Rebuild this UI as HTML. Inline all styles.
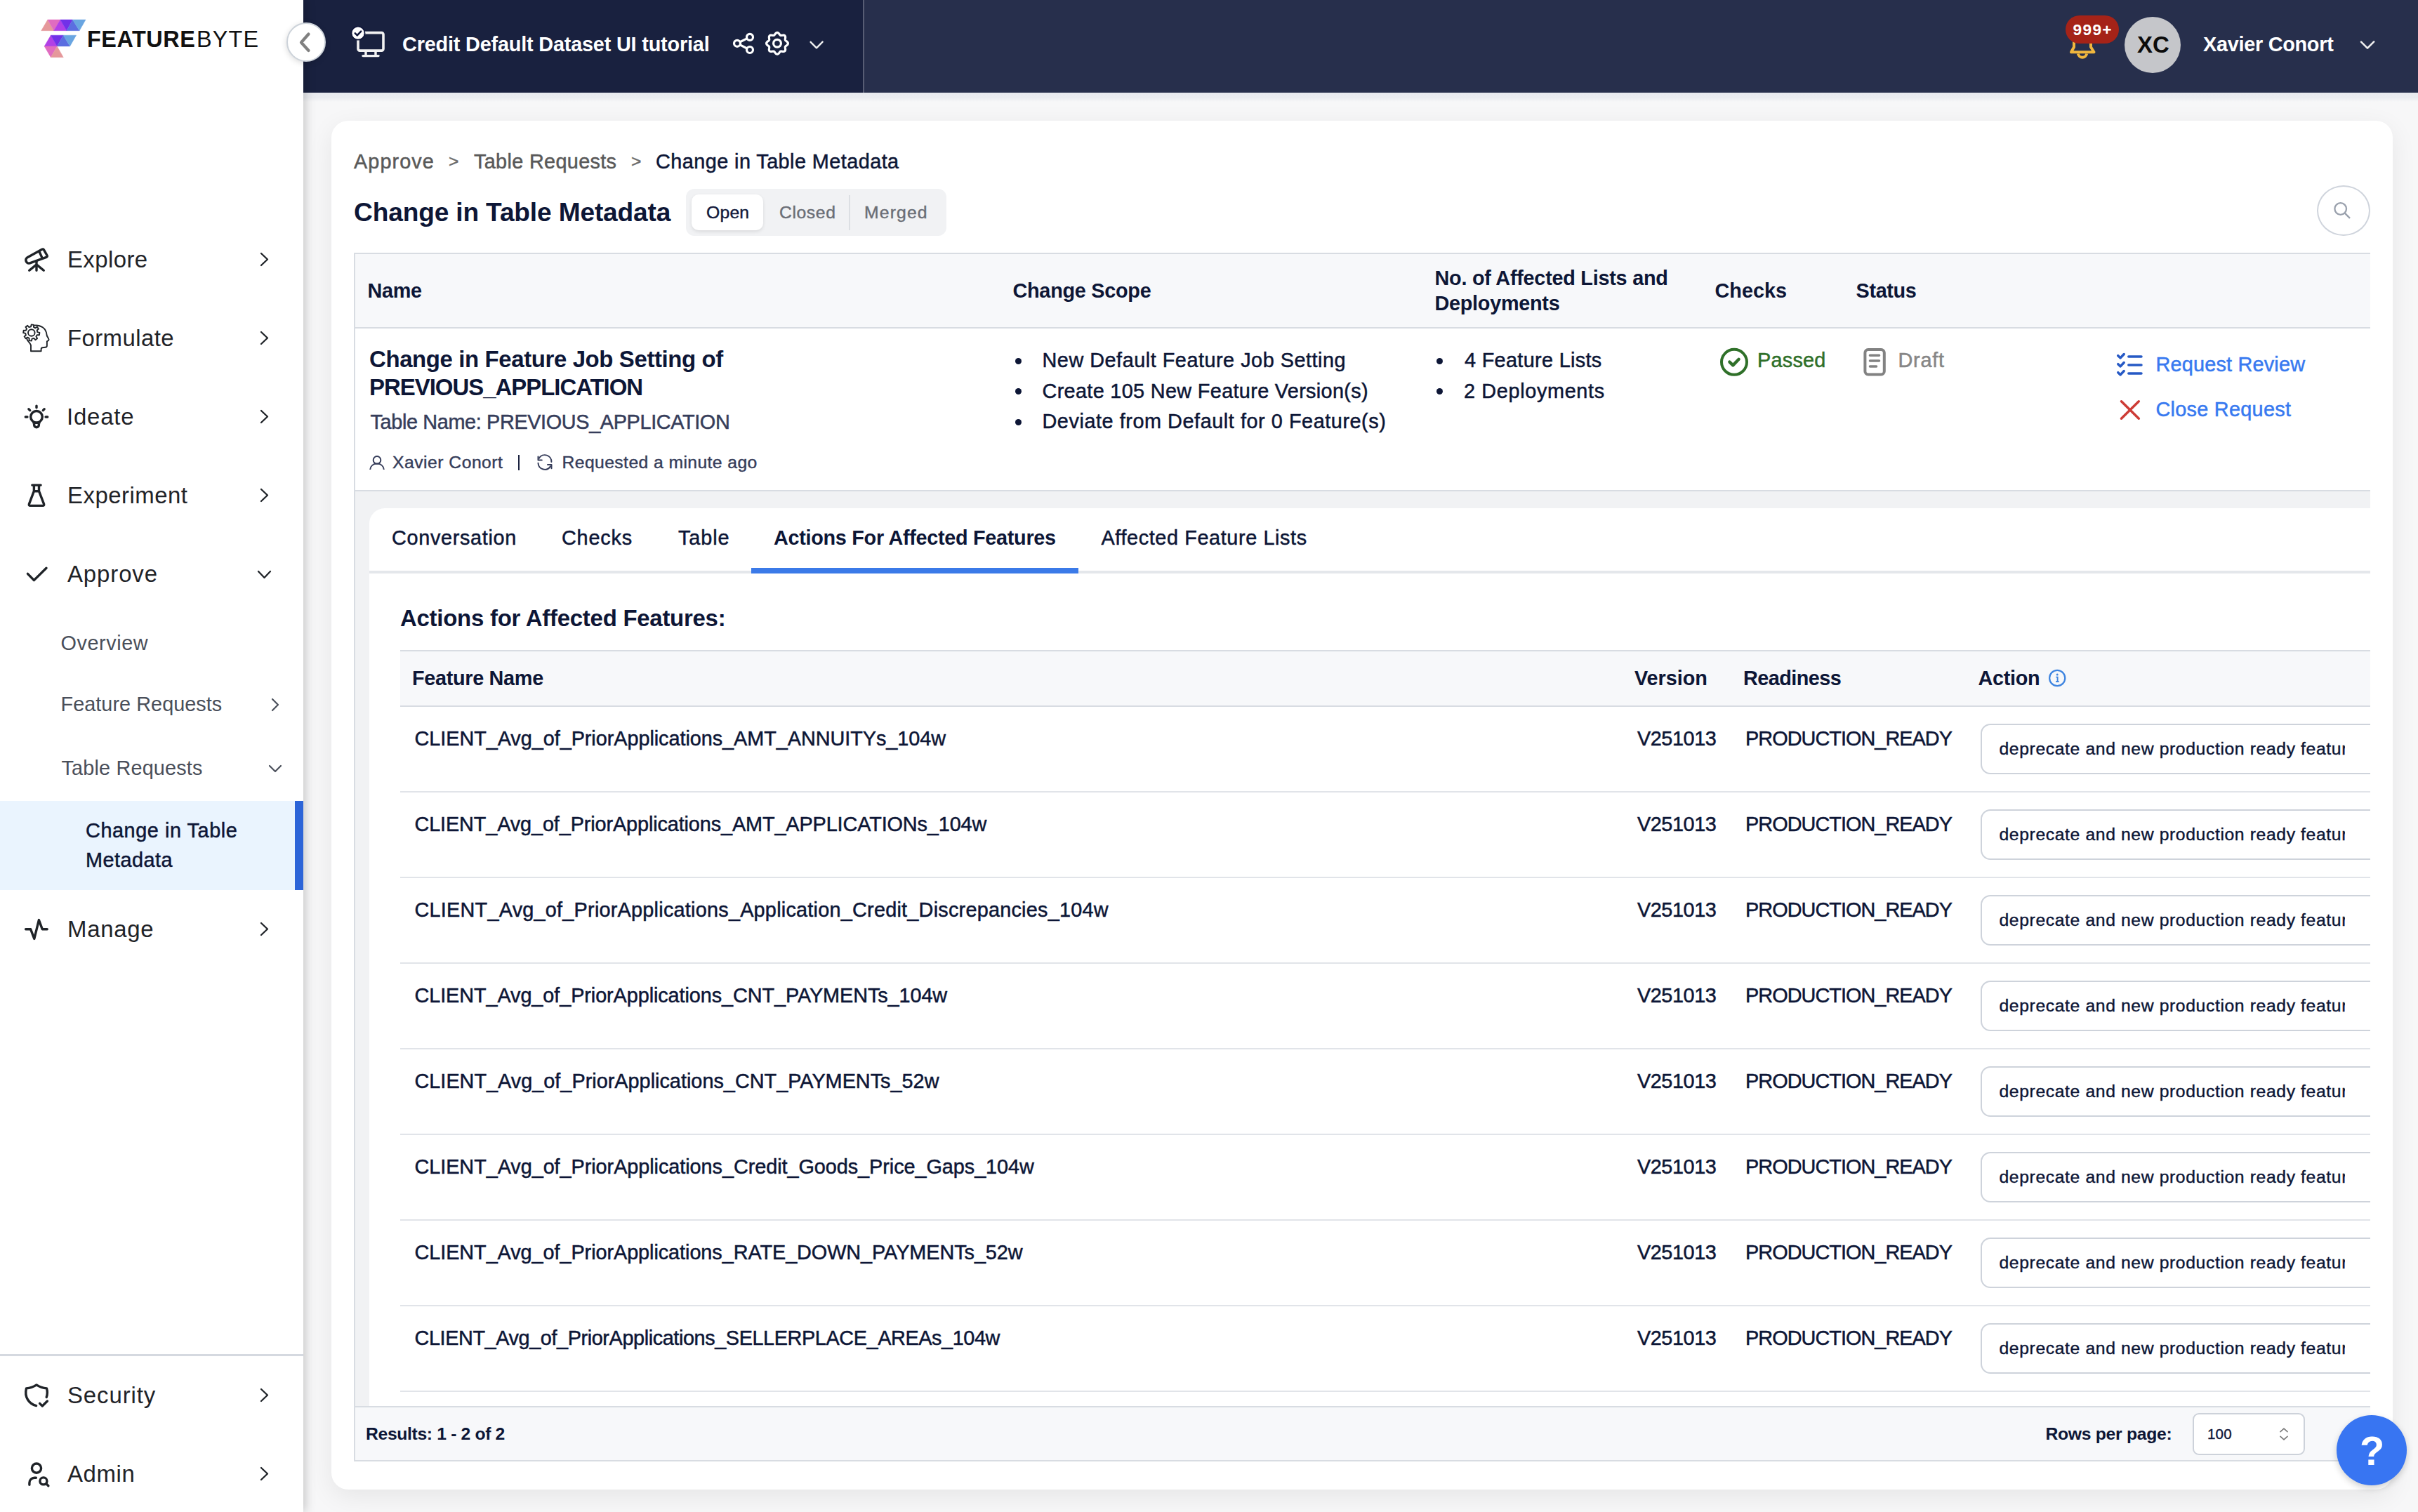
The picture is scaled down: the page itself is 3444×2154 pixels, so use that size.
<!DOCTYPE html>
<html lang="en">
<head>
<meta charset="utf-8">
<title>FeatureByte - Change in Table Metadata</title>
<style>
*{box-sizing:border-box;margin:0;padding:0;}
html,body{width:3444px;height:2154px;overflow:hidden;background:#f7f7f8;}
body{font-family:"Liberation Sans",sans-serif;color:#0d1636;}
#root{position:relative;width:3444px;height:2154px;overflow:hidden;background:#f7f7f8;}
.abs{position:absolute;}
svg{overflow:visible;}
.t{position:absolute;white-space:nowrap;line-height:1;transform:translateY(-50%);}
.logo{font-family:"Liberation Sans",sans-serif;letter-spacing:0.55px;}
.logo b{font-weight:700;}
.logo .lt{font-weight:400;margin-left:1.5px;letter-spacing:1.2px;}
#sidebar{position:absolute;left:0;top:0;width:432px;height:2154px;background:#fff;box-shadow:3px 0 14px rgba(0,0,0,.20);z-index:5;}
#header{position:absolute;left:0;top:0;width:3444px;height:132px;background:#272f4c;z-index:3;}
#hleft{position:absolute;left:432px;top:0;width:799px;height:132px;background:#19213f;border-right:2px solid #575d74;}
#hshadow{position:absolute;left:432px;top:132px;width:3012px;height:13px;background:linear-gradient(#e8eaef 0,#eaecf0 55%,#f7f7f8 100%);z-index:0;}
#collapse{position:absolute;left:408px;top:32px;width:56px;height:56px;border-radius:50%;background:#fff;border:2px solid #cdd3da;z-index:6;box-shadow:0 2px 8px rgba(0,0,0,.15);}
#card{position:absolute;left:472px;top:172px;width:2936px;height:1950px;background:#fff;border-radius:24px;box-shadow:0 10px 36px rgba(0,0,0,.075);z-index:1;}
#cardin{position:absolute;left:-472px;top:-172px;width:3444px;height:2154px;}
#clip{position:absolute;left:0;top:0;width:3376px;height:2154px;overflow:hidden;}
#help{position:absolute;left:3328px;top:2016px;width:100px;height:100px;border-radius:50%;background:#3875f2;z-index:8;box-shadow:0 4px 10px rgba(0,0,0,.18);}
</style>
</head>
<body>
<div id="root">
<div id="hshadow"></div>
<div id="header"><div id="hleft"></div>
<svg class="abs" style="left:495px;top:30px;" width="70" height="60" viewBox="495 30 70 60" fill="none"><rect x="510" y="46.6" width="36" height="25.5" rx="2.5" stroke="#f2f2f2" stroke-width="3.6"/><path d="M521 73 V79 M535 73 V79" stroke="#f2f2f2" stroke-width="3.4"/><path d="M517 79.6 H539" stroke="#f2f2f2" stroke-width="3.4" stroke-linecap="round"/><circle cx="510" cy="47.2" r="10.4" fill="#10163a"/><circle cx="510" cy="47.2" r="8.6" fill="#fff"/><path d="M505.8 47.4 L508.8 50.3 L514.2 44.6" stroke="#10163a" stroke-width="2.5" stroke-linecap="round" stroke-linejoin="round"/></svg>
<span class="t" id="t14" style="left:573px;top:63.4px;font-size:28.84px;font-weight:600;color:#ffffff;letter-spacing:-0.183px;">Credit Default Dataset UI tutorial</span>
<svg class="abs" style="left:1040px;top:40px;" width="40" height="44" viewBox="1040 40 40 44" fill="none"><g stroke="#fff" stroke-width="3.2"><circle cx="1050" cy="61.8" r="4.5"/><circle cx="1068" cy="52.9" r="4.5"/><circle cx="1068" cy="71" r="4.5"/><path d="M1054.1 59.8 L1063.9 54.9 M1054.1 63.8 L1063.9 69"/></g></svg>
<svg class="abs" style="left:1085px;top:40px;" width="44" height="44" viewBox="1085 40 44 44" fill="none"><g stroke="#fff" stroke-width="3.2" stroke-linejoin="round"><path d="M1122.40 61.80 L1122.31 62.40 L1122.07 62.99 L1121.68 63.54 L1121.19 64.05 L1120.63 64.51 L1120.07 64.94 L1119.53 65.33 L1119.07 65.72 L1118.70 66.12 L1118.46 66.55 L1118.33 67.02 L1118.30 67.56 L1118.36 68.16 L1118.46 68.82 L1118.56 69.52 L1118.62 70.24 L1118.61 70.95 L1118.49 71.62 L1118.25 72.20 L1117.89 72.69 L1117.40 73.05 L1116.82 73.29 L1116.15 73.41 L1115.44 73.42 L1114.72 73.36 L1114.02 73.26 L1113.36 73.16 L1112.76 73.10 L1112.22 73.13 L1111.75 73.26 L1111.32 73.50 L1110.92 73.87 L1110.53 74.33 L1110.14 74.87 L1109.71 75.43 L1109.25 75.99 L1108.74 76.48 L1108.19 76.87 L1107.60 77.11 L1107.00 77.20 L1106.40 77.11 L1105.81 76.87 L1105.26 76.48 L1104.75 75.99 L1104.29 75.43 L1103.86 74.87 L1103.47 74.33 L1103.08 73.87 L1102.68 73.50 L1102.25 73.26 L1101.78 73.13 L1101.24 73.10 L1100.64 73.16 L1099.98 73.26 L1099.28 73.36 L1098.56 73.42 L1097.85 73.41 L1097.18 73.29 L1096.60 73.05 L1096.11 72.69 L1095.75 72.20 L1095.51 71.62 L1095.39 70.95 L1095.38 70.24 L1095.44 69.52 L1095.54 68.82 L1095.64 68.16 L1095.70 67.56 L1095.67 67.02 L1095.54 66.55 L1095.30 66.12 L1094.93 65.72 L1094.47 65.33 L1093.93 64.94 L1093.37 64.51 L1092.81 64.05 L1092.32 63.54 L1091.93 62.99 L1091.69 62.40 L1091.60 61.80 L1091.69 61.20 L1091.93 60.61 L1092.32 60.06 L1092.81 59.55 L1093.37 59.09 L1093.93 58.66 L1094.47 58.27 L1094.93 57.88 L1095.30 57.48 L1095.54 57.05 L1095.67 56.58 L1095.70 56.04 L1095.64 55.44 L1095.54 54.78 L1095.44 54.08 L1095.38 53.36 L1095.39 52.65 L1095.51 51.98 L1095.75 51.40 L1096.11 50.91 L1096.60 50.55 L1097.18 50.31 L1097.85 50.19 L1098.56 50.18 L1099.28 50.24 L1099.98 50.34 L1100.64 50.44 L1101.24 50.50 L1101.78 50.47 L1102.25 50.34 L1102.68 50.10 L1103.08 49.73 L1103.47 49.27 L1103.86 48.73 L1104.29 48.17 L1104.75 47.61 L1105.26 47.12 L1105.81 46.73 L1106.40 46.49 L1107.00 46.40 L1107.60 46.49 L1108.19 46.73 L1108.74 47.12 L1109.25 47.61 L1109.71 48.17 L1110.14 48.73 L1110.53 49.27 L1110.92 49.73 L1111.32 50.10 L1111.75 50.34 L1112.22 50.47 L1112.76 50.50 L1113.36 50.44 L1114.02 50.34 L1114.72 50.24 L1115.44 50.18 L1116.15 50.19 L1116.82 50.31 L1117.40 50.55 L1117.89 50.91 L1118.25 51.40 L1118.49 51.98 L1118.61 52.65 L1118.62 53.36 L1118.56 54.08 L1118.46 54.78 L1118.36 55.44 L1118.30 56.04 L1118.33 56.58 L1118.46 57.05 L1118.70 57.48 L1119.07 57.88 L1119.53 58.27 L1120.07 58.66 L1120.63 59.09 L1121.19 59.55 L1121.68 60.06 L1122.07 60.61 L1122.31 61.20Z"/><circle cx="1107" cy="61.8" r="5.4"/></g></svg>
<svg class="abs" style="left:1148px;top:52px;" width="30" height="24" viewBox="1148 52 30 24" fill="none"><path d="M1154.6 59.8 L1163 68.3 L1171.6 59.6" stroke="#eee" stroke-width="2.4" stroke-linecap="round" stroke-linejoin="round"/></svg>
<svg class="abs" style="left:2940px;top:26px;" width="50" height="64" viewBox="2940 26 50 64" fill="none"><g stroke="#f0b73e" stroke-width="4" stroke-linejoin="round"><path d="M2950 74.3 H2982.5 L2978 67 V46 A12 12 0 0 0 2954 46 V67 Z"/><path d="M2959.8 76.5 A6.3 6.3 0 0 0 2972.2 76.5" stroke-linecap="butt"/></g></svg>
<div class="abs" style="left:2942px;top:22px;width:76px;height:40px;background:#a52318;border-radius:20px;"></div>
<span class="t" id="t15" style="left:2952.5px;top:42px;font-size:22.66px;font-weight:700;color:#fff;letter-spacing:1.353px;">999+</span>
<div class="abs" style="left:3026px;top:24px;width:80px;height:80px;background:#c5c6ca;border-radius:50%;"></div>
<span class="t" id="t16" style="left:3044px;top:63.6px;font-size:32.96px;font-weight:700;color:#0c0c0c;letter-spacing:-0.042px;">XC</span>
<span class="t" id="t17" style="left:3138px;top:63.2px;font-size:28.84px;font-weight:600;color:#fff;letter-spacing:-0.273px;">Xavier Conort</span>
<svg class="abs" style="left:3355px;top:52px;" width="34" height="24" viewBox="3355 52 34 24" fill="none"><path d="M3363 59.6 L3372 68.6 L3381.2 59.4" stroke="#eee" stroke-width="2.6" stroke-linecap="round" stroke-linejoin="round"/></svg>
</div>
<div id="sidebar">
<svg class="abs" style="left:0px;top:0px;" width="432" height="110" viewBox="0 0 432 110" fill="none"><polygon points="58.68,43.70 67.87,28.06 76.67,43.70" fill="#e5989b" stroke="#e5989b" stroke-width="0.4"/><polygon points="67.87,28.06 85.86,28.06 76.67,43.70" fill="#e06cc0" stroke="#e06cc0" stroke-width="0.4"/><polygon points="76.67,43.70 85.86,28.06 94.98,43.70" fill="#b140e6" stroke="#b140e6" stroke-width="0.4"/><polygon points="85.86,28.06 103.47,28.06 94.98,43.70" fill="#7131e8" stroke="#7131e8" stroke-width="0.4"/><polygon points="94.98,43.70 103.47,28.06 113.15,43.70" fill="#5b6ee0" stroke="#5b6ee0" stroke-width="0.4"/><polygon points="103.47,28.06 122.08,28.06 113.15,43.70" fill="#69a5e1" stroke="#69a5e1" stroke-width="0.4"/><polygon points="63.15,65.91 72.33,50.15 81.33,65.91" fill="#b140e6" stroke="#b140e6" stroke-width="0.4"/><polygon points="72.33,50.15 90.20,50.15 81.33,65.91" fill="#7131e8" stroke="#7131e8" stroke-width="0.4"/><polygon points="81.33,65.91 90.20,50.15 99.63,65.91" fill="#5b6ee0" stroke="#5b6ee0" stroke-width="0.4"/><polygon points="90.20,50.15 108.62,50.15 99.63,65.91" fill="#69a5e1" stroke="#69a5e1" stroke-width="0.4"/><polygon points="63.15,65.91 81.33,65.91 72.33,81.72" fill="#e06cc0" stroke="#e06cc0" stroke-width="0.4"/><polygon points="81.33,65.91 90.32,81.72 72.33,81.72" fill="#e5989b" stroke="#e5989b" stroke-width="0.4"/></svg>
<span class="t logo" id="lg" style="left:124px;top:55.5px;font-size:32.4px;color:#111;"><b>FEATURE</b><span class="lt">BYTE</span></span>
<svg class="abs" style="left:24px;top:340px;" width="60" height="60" viewBox="0 0 60 60" fill="none"><g stroke="#1f2328" stroke-width="3.4" stroke-linecap="round" stroke-linejoin="round"><path d="M14.6 27 L35.8 15.3 Q37.6 14.3 38.6 16.1 L43.1 24 Q43.9 25.7 42.1 26.4 L18.5 34.8 Q15 36 13.3 32.6 Q11.9 29 14.6 27 Z"/><path d="M32.1 18.7 L35.7 26.6"/><path d="M28 31.6 V45.2 M28 36.9 L17.7 45.2 M28 36.9 L38.3 45.2"/></g></svg>
<span class="t" id="t1" style="left:96px;top:370.2px;font-size:32.96px;color:#1f2328;letter-spacing:0.391px;">Explore</span>
<svg class="abs" style="left:368.5px;top:358px;" width="15" height="23" viewBox="-7.5 -11.5 15 23" fill="none"><path d="M-4.5 -8.5 L4.5 0 L-4.5 8.5" stroke="#1f2328" stroke-width="2.3" stroke-linecap="round" stroke-linejoin="round"/></svg>
<svg class="abs" style="left:24px;top:452px;" width="60" height="60" viewBox="0 0 60 60" fill="none"><g stroke="#1f2328" stroke-width="1.9" stroke-linecap="round" stroke-linejoin="round"><path d="M29.36 21.18 L32.40 21.89 L31.92 25.30 L28.80 25.15 L27.44 27.47 L29.08 30.12 L26.33 32.20 L24.23 29.89 L21.62 30.56 L20.91 33.60 L17.50 33.12 L17.65 30.00 L15.33 28.64 L12.68 30.28 L10.60 27.53 L12.91 25.43 L12.24 22.82 L9.20 22.11 L9.68 18.70 L12.80 18.85 L14.16 16.53 L12.52 13.88 L15.27 11.80 L17.37 14.11 L19.98 13.44 L20.69 10.40 L24.10 10.88 L23.95 14.00 L26.27 15.36 L28.92 13.72 L31.00 16.47 L28.69 18.57Z"/><circle cx="20.8" cy="22" r="4.8"/><path d="M24.6 11.6 C34 10.6 41.5 15.5 42.5 24.5 C42.3 27 45.6 30 45.6 32 C45.6 33.6 43.4 33.8 42.9 34.3 V40.5 Q42.9 42.6 40.5 42.8 L36.5 43.2 Q34.6 43.5 34.6 45.4 V48.2 H20 V39.7 C19 36.5 14.5 33.5 13.9 29.8"/></g></svg>
<span class="t" id="t2" style="left:96px;top:481.7px;font-size:32.96px;color:#1f2328;letter-spacing:0.397px;">Formulate</span>
<svg class="abs" style="left:368.5px;top:469.5px;" width="15" height="23" viewBox="-7.5 -11.5 15 23" fill="none"><path d="M-4.5 -8.5 L4.5 0 L-4.5 8.5" stroke="#1f2328" stroke-width="2.3" stroke-linecap="round" stroke-linejoin="round"/></svg>
<svg class="abs" style="left:24px;top:564px;" width="60" height="60" viewBox="0 0 60 60" fill="none"><g stroke="#1f2328" stroke-width="3.4" stroke-linecap="round" stroke-linejoin="round"><circle cx="28" cy="29.8" r="8.3"/><path d="M23.8 38.3 H32.2 M24.6 38.3 V41.3 A3.4 3.4 0 0 0 31.4 41.3 V38.3"/><path d="M28 14.1 V16.7 M12.3 30 H14.9 M41.1 30 H43.7 M16.9 18.8 L18.7 20.6 M39.1 18.8 L37.3 20.6"/></g></svg>
<span class="t" id="t3" style="left:95px;top:593.7px;font-size:32.96px;color:#1f2328;letter-spacing:0.798px;">Ideate</span>
<svg class="abs" style="left:368.5px;top:581.5px;" width="15" height="23" viewBox="-7.5 -11.5 15 23" fill="none"><path d="M-4.5 -8.5 L4.5 0 L-4.5 8.5" stroke="#1f2328" stroke-width="2.3" stroke-linecap="round" stroke-linejoin="round"/></svg>
<svg class="abs" style="left:24px;top:676px;" width="60" height="60" viewBox="24 676 60 60" fill="none"><g stroke="#1f2328" stroke-width="3.4" stroke-linecap="round" stroke-linejoin="round"><path d="M45.8 691.1 H58.1 M48.4 691.1 V699.7 L41.4 718.2 Q40.8 720.4 43 720.4 H61 Q63.2 720.4 62.6 718.2 L55.5 699.7 V691.1 M48.4 699.7 H55.5"/></g></svg>
<span class="t" id="t4" style="left:96px;top:706.1px;font-size:32.96px;color:#1f2328;letter-spacing:0.482px;">Experiment</span>
<svg class="abs" style="left:368.5px;top:693.9px;" width="15" height="23" viewBox="-7.5 -11.5 15 23" fill="none"><path d="M-4.5 -8.5 L4.5 0 L-4.5 8.5" stroke="#1f2328" stroke-width="2.3" stroke-linecap="round" stroke-linejoin="round"/></svg>
<svg class="abs" style="left:24px;top:788px;" width="60" height="60" viewBox="24 788 60 60" fill="none"><path d="M39.4 817.4 L48.4 826.6 L66 809.2" stroke="#1f2328" stroke-width="3.4" stroke-linecap="round" stroke-linejoin="round"/></svg>
<span class="t" id="t5" style="left:96px;top:818.3px;font-size:32.96px;color:#1f2328;letter-spacing:0.882px;">Approve</span>
<svg class="abs" style="left:364.5px;top:810.5px;" width="23" height="15" viewBox="-11.5 -7.5 23 15" fill="none"><path d="M-8.5 -4.5 L0 4.5 L8.5 -4.5" stroke="#1f2328" stroke-width="2.3" stroke-linecap="round" stroke-linejoin="round"/></svg>
<span class="t" id="t6" style="left:86.5px;top:915.8px;font-size:28.84px;color:#4a4f5a;letter-spacing:0.559px;">Overview</span>
<span class="t" id="t7" style="left:86.5px;top:1003px;font-size:28.84px;color:#4a4f5a;letter-spacing:0.042px;">Feature Requests</span>
<svg class="abs" style="left:385px;top:992.6px;" width="14" height="22" viewBox="-7 -11 14 22" fill="none"><path d="M-4 -8 L4 0 L-4 8" stroke="#4a4f5a" stroke-width="2.2" stroke-linecap="round" stroke-linejoin="round"/></svg>
<span class="t" id="t8" style="left:87.5px;top:1094px;font-size:28.84px;color:#4a4f5a;letter-spacing:0.169px;">Table Requests</span>
<svg class="abs" style="left:381px;top:1087.5px;" width="22" height="14" viewBox="-11 -7 22 14" fill="none"><path d="M-8 -4 L0 4 L8 -4" stroke="#4a4f5a" stroke-width="2.2" stroke-linecap="round" stroke-linejoin="round"/></svg>
<div class="abs" style="left:0px;top:1141px;width:432px;height:127px;background:#eaf4fe;"></div>
<div class="abs" style="left:420px;top:1141px;width:12px;height:127px;background:#2c64d8;"></div>
<span class="t" id="t9" style="left:122px;top:1182.6px;font-size:28.84px;-webkit-text-stroke:0.49px;letter-spacing:0.566px;">Change in Table</span>
<span class="t" id="t10" style="left:122px;top:1225.4px;font-size:28.84px;-webkit-text-stroke:0.49px;letter-spacing:0.468px;">Metadata</span>
<svg class="abs" style="left:24px;top:1293px;" width="60" height="60" viewBox="24 1293 60 60" fill="none"><path d="M36.6 1323.7 H43.6 L48.8 1337.4 L55.4 1310.6 L60.2 1323.7 H67.2" stroke="#1f2328" stroke-width="3.4" stroke-linecap="round" stroke-linejoin="round"/></svg>
<span class="t" id="t11" style="left:96px;top:1324.1px;font-size:32.96px;color:#1f2328;letter-spacing:0.723px;">Manage</span>
<svg class="abs" style="left:368.5px;top:1311.9px;" width="15" height="23" viewBox="-7.5 -11.5 15 23" fill="none"><path d="M-4.5 -8.5 L4.5 0 L-4.5 8.5" stroke="#1f2328" stroke-width="2.3" stroke-linecap="round" stroke-linejoin="round"/></svg>
<div class="abs" style="left:0px;top:1929px;width:432px;height:3px;background:#d5d9e0;"></div>
<svg class="abs" style="left:24px;top:1958px;" width="60" height="60" viewBox="0 0 60 60" fill="none"><g stroke="#1f2328" stroke-width="3.4" stroke-linecap="round" stroke-linejoin="round"><path d="M42.2 32.5 C43.8 27.5 43.6 23.3 42.5 19.9 Q35 19.5 28 14.9 Q21 19.5 13.5 19.9 C10.3 32.5 17.5 42 27.6 44.6"/><path d="M32.6 41.4 L36.3 45 L43.4 38"/></g></svg>
<span class="t" id="t12" style="left:96px;top:1988px;font-size:32.96px;color:#1f2328;letter-spacing:0.889px;">Security</span>
<svg class="abs" style="left:368.5px;top:1975.8px;" width="15" height="23" viewBox="-7.5 -11.5 15 23" fill="none"><path d="M-4.5 -8.5 L4.5 0 L-4.5 8.5" stroke="#1f2328" stroke-width="2.3" stroke-linecap="round" stroke-linejoin="round"/></svg>
<svg class="abs" style="left:24px;top:2070px;" width="60" height="60" viewBox="0 0 60 60" fill="none"><g stroke="#1f2328" stroke-width="3.4" stroke-linecap="round" stroke-linejoin="round"><circle cx="28" cy="21.6" r="6.6"/><path d="M17.9 45.2 V42.5 A7.2 7.2 0 0 1 25.1 35.2 H27.4"/><circle cx="37.9" cy="39.9" r="5"/><path d="M41.8 43.6 L44.9 46.7"/></g></svg>
<span class="t" id="t13" style="left:96px;top:2100.2px;font-size:32.96px;color:#1f2328;letter-spacing:0.594px;">Admin</span>
<svg class="abs" style="left:368.5px;top:2088px;" width="15" height="23" viewBox="-7.5 -11.5 15 23" fill="none"><path d="M-4.5 -8.5 L4.5 0 L-4.5 8.5" stroke="#1f2328" stroke-width="2.3" stroke-linecap="round" stroke-linejoin="round"/></svg>
</div>
<div id="collapse"><svg class="abs" style="left:11.5px;top:7.5px" width="28" height="36" viewBox="0 0 28 36" fill="none"><path d="M17.5 6.5 L7 18.5 L17.5 30" stroke="#808080" stroke-width="4.2" stroke-linecap="round" stroke-linejoin="round"/></svg></div>
<div id="card"><div id="cardin"><div id="clip">
<span class="t" id="t18" style="left:504px;top:230px;font-size:28.84px;-webkit-text-stroke:0.49px;color:#595959;letter-spacing:1.060px;">Approve</span>
<span class="t" id="t19" style="left:639px;top:230px;font-size:24.72px;-webkit-text-stroke:0.42px;color:#6b6b6b;letter-spacing:0.000px;">&gt;</span>
<span class="t" id="t20" style="left:675px;top:230px;font-size:28.84px;-webkit-text-stroke:0.49px;color:#595959;letter-spacing:0.329px;">Table Requests</span>
<span class="t" id="t21" style="left:899px;top:230px;font-size:24.72px;-webkit-text-stroke:0.42px;color:#6b6b6b;letter-spacing:0.000px;">&gt;</span>
<span class="t" id="t22" style="left:934px;top:230px;font-size:28.84px;-webkit-text-stroke:0.49px;letter-spacing:0.438px;">Change in Table Metadata</span>
<span class="t" id="t23" style="left:504px;top:302.6px;font-size:37.08px;font-weight:600;letter-spacing:-0.140px;">Change in Table Metadata</span>
<div class="abs" style="left:977px;top:269px;width:371px;height:67px;background:#f1f2f4;border-radius:12px;"></div>
<div class="abs" style="left:985px;top:277px;width:102px;height:51px;background:#fff;border-radius:10px;box-shadow:0 2px 5px rgba(0,0,0,.10);"></div>
<span class="t" id="t24" style="left:1006px;top:303.3px;font-size:24.72px;-webkit-text-stroke:0.42px;color:#11183a;letter-spacing:0.203px;">Open</span>
<span class="t" id="t25" style="left:1110px;top:303.3px;font-size:24.72px;-webkit-text-stroke:0.42px;color:#6a6e76;letter-spacing:0.594px;">Closed</span>
<div class="abs" style="left:1209px;top:278px;width:2px;height:50px;background:#dcdfe3;"></div>
<span class="t" id="t26" style="left:1231px;top:303.3px;font-size:24.72px;-webkit-text-stroke:0.42px;color:#6a6e76;letter-spacing:1.146px;">Merged</span>
<div class="abs" style="left:3300px;top:264px;width:76px;height:72px;border:2px solid #cfd4dc;border-radius:50%;"></div>
<svg class="abs" style="left:3316px;top:280px;" width="44" height="44" viewBox="3316 280 44 44" fill="none"><circle cx="3333.7" cy="297.5" r="8.3" stroke="#9aa1ad" stroke-width="2.3"/><path d="M3339.8 303.6 L3347 310.9" stroke="#9aa1ad" stroke-width="2.3"/></svg>
<div class="abs" style="left:504px;top:360px;width:2872px;height:1722px;border-left:2px solid #d8dce2;"></div>
<div class="abs" style="left:504px;top:360px;width:2872px;height:108px;background:#f7f8fa;border-top:2px solid #d8dce2;border-bottom:2px solid #d8dce2;border-left:2px solid #d8dce2;"></div>
<span class="t" id="t27" style="left:523.5px;top:414px;font-size:28.84px;font-weight:600;letter-spacing:-0.312px;">Name</span>
<span class="t" id="t28" style="left:1442.5px;top:414px;font-size:28.84px;font-weight:600;letter-spacing:-0.277px;">Change Scope</span>
<span class="t" id="t29" style="left:2442.5px;top:414px;font-size:28.84px;font-weight:600;letter-spacing:0.011px;">Checks</span>
<span class="t" id="t30" style="left:2643.5px;top:414px;font-size:28.84px;font-weight:600;letter-spacing:-0.346px;">Status</span>
<span class="t" id="t31" style="left:2043.5px;top:396px;font-size:28.84px;font-weight:600;letter-spacing:-0.254px;">No. of Affected Lists and</span>
<span class="t" id="t32" style="left:2043.5px;top:432px;font-size:28.84px;font-weight:600;letter-spacing:-0.285px;">Deployments</span>
<div class="abs" style="left:506px;top:698px;width:2870px;height:2px;background:#d8dce2;"></div>
<span class="t" id="t33" style="left:526px;top:511.8px;font-size:32.96px;font-weight:600;letter-spacing:-0.387px;">Change in Feature Job Setting of</span>
<span class="t" id="t34" style="left:526px;top:551.8px;font-size:32.96px;font-weight:600;letter-spacing:-1.020px;">PREVIOUS_APPLICATION</span>
<span class="t" id="t35" style="left:527.5px;top:601.3px;font-size:28.84px;-webkit-text-stroke:0.49px;color:#363d5a;letter-spacing:-0.358px;">Table Name: PREVIOUS_APPLICATION</span>
<svg class="abs" style="left:522px;top:646px;" width="30" height="28" viewBox="522 646 30 28" fill="none"><g stroke="#363d5a" stroke-width="2"><circle cx="537" cy="655.4" r="5.3"/><path d="M527.2 669 C527.8 663.5 532 660.6 537 660.6 C542 660.6 546.2 663.5 546.8 669"/></g></svg>
<span class="t" id="t36" style="left:559px;top:659px;font-size:24.72px;-webkit-text-stroke:0.42px;color:#363d5a;letter-spacing:0.483px;">Xavier Conort</span>
<div class="abs" style="left:738px;top:647.5px;width:2px;height:22px;background:#1c2340;"></div>
<svg class="abs" style="left:760px;top:644px;" width="32" height="30" viewBox="760 644 32 30" fill="none"><g stroke="#363d5a" stroke-width="2" stroke-linecap="round" stroke-linejoin="round"><path d="M767.9 652.6 A9.5 9.5 0 0 1 785.4 658"/><path d="M766.5 650.4 V655.6 H771.8"/><path d="M766.5 659.8 A9.5 9.5 0 0 0 784 664.4"/><path d="M780 662 H785.5 V667.3"/></g></svg>
<span class="t" id="t37" style="left:800.5px;top:659px;font-size:24.72px;-webkit-text-stroke:0.42px;color:#363d5a;letter-spacing:0.404px;">Requested a minute ago</span>
<div class="abs" style="left:1446px;top:509.5px;width:9px;height:9px;background:#0d1636;border-radius:50%;"></div>
<span class="t" id="t38" style="left:1484.5px;top:513px;font-size:28.84px;-webkit-text-stroke:0.49px;letter-spacing:0.515px;">New Default Feature Job Setting</span>
<div class="abs" style="left:1446px;top:553px;width:9px;height:9px;background:#0d1636;border-radius:50%;"></div>
<span class="t" id="t39" style="left:1484.5px;top:556.5px;font-size:28.84px;-webkit-text-stroke:0.49px;letter-spacing:0.333px;">Create 105 New Feature Version(s)</span>
<div class="abs" style="left:1446px;top:596.5px;width:9px;height:9px;background:#0d1636;border-radius:50%;"></div>
<span class="t" id="t40" style="left:1484.5px;top:600px;font-size:28.84px;-webkit-text-stroke:0.49px;letter-spacing:0.553px;">Deviate from Default for 0 Feature(s)</span>
<div class="abs" style="left:2046px;top:509.5px;width:9px;height:9px;background:#0d1636;border-radius:50%;"></div>
<span class="t" id="t41" style="left:2086px;top:513px;font-size:28.84px;-webkit-text-stroke:0.49px;letter-spacing:0.323px;">4 Feature Lists</span>
<div class="abs" style="left:2046px;top:553px;width:9px;height:9px;background:#0d1636;border-radius:50%;"></div>
<span class="t" id="t42" style="left:2085px;top:556.5px;font-size:28.84px;-webkit-text-stroke:0.49px;letter-spacing:0.650px;">2 Deployments</span>
<svg class="abs" style="left:2446px;top:492px;" width="48" height="48" viewBox="2446 492 48 48" fill="none"><circle cx="2470" cy="515.8" r="18" stroke="#2f7029" stroke-width="4"/><path d="M2463.4 515.6 L2468.3 520.4 L2476.6 511.8" stroke="#2f7029" stroke-width="4.4" stroke-linecap="round" stroke-linejoin="round"/></svg>
<span class="t" id="t43" style="left:2503px;top:513.2px;font-size:28.84px;-webkit-text-stroke:0.49px;color:#2f7029;letter-spacing:0.246px;">Passed</span>
<svg class="abs" style="left:2650px;top:492px;" width="40" height="48" viewBox="2650 492 40 48" fill="none"><rect x="2656.4" y="498" width="27.4" height="35.5" rx="4.5" stroke="#828282" stroke-width="4"/><path d="M2663.4 506.2 H2676.6 M2663.4 514 H2676.6 M2663.4 522 H2672.6" stroke="#828282" stroke-width="3.4" stroke-linecap="round"/></svg>
<span class="t" id="t44" style="left:2703.5px;top:513.2px;font-size:28.84px;-webkit-text-stroke:0.49px;color:#868686;letter-spacing:0.741px;">Draft</span>
<svg class="abs" style="left:3010px;top:498px;" width="46" height="44" viewBox="3010 498 46 44" fill="none"><g stroke="#2659c5" stroke-width="3.5" stroke-linecap="round" stroke-linejoin="round"><path d="M3031.8 507.9 H3050" /><path d="M3016.8 506.7 L3020.2 509.9 L3025.2 504.5"/><path d="M3031.8 519.9 H3050" /><path d="M3016.8 518.7 L3020.2 521.9 L3025.2 516.5"/><path d="M3031.8 531.9 H3050" /><path d="M3016.8 530.7 L3020.2 533.9 L3025.2 528.5"/></g></svg>
<span class="t" id="t45" style="left:3070.5px;top:519.2px;font-size:28.84px;-webkit-text-stroke:0.49px;color:#3779f0;letter-spacing:0.200px;">Request Review</span>
<svg class="abs" style="left:3014px;top:564px;" width="40" height="40" viewBox="3014 564 40 40" fill="none"><path d="M3021.5 571.8 L3046.3 596.2 M3046.3 571.8 L3021.5 596.2" stroke="#cd3c36" stroke-width="3.5" stroke-linecap="round"/></svg>
<span class="t" id="t46" style="left:3070.5px;top:583px;font-size:28.84px;-webkit-text-stroke:0.49px;color:#3779f0;letter-spacing:0.275px;">Close Request</span>
<div class="abs" style="left:506px;top:700px;width:2870px;height:1304px;background:#f1f2f4;"></div>
<div class="abs" style="left:526px;top:724px;width:2850px;height:1280px;background:#fff;border-radius:22px 0 0 0;"></div>
<div class="abs" style="left:526px;top:813px;width:2850px;height:4px;background:#e4e7eb;"></div>
<div class="abs" style="left:1070px;top:809px;width:466px;height:8px;background:#3b7ae8;"></div>
<span class="t" id="t47" style="left:558px;top:765.5px;font-size:28.84px;-webkit-text-stroke:0.49px;letter-spacing:0.667px;">Conversation</span>
<span class="t" id="t48" style="left:800px;top:765.5px;font-size:28.84px;-webkit-text-stroke:0.49px;letter-spacing:0.786px;">Checks</span>
<span class="t" id="t49" style="left:966px;top:765.5px;font-size:28.84px;-webkit-text-stroke:0.49px;letter-spacing:0.902px;">Table</span>
<span class="t" id="t50" style="left:1102px;top:765.5px;font-size:28.84px;font-weight:600;letter-spacing:-0.304px;">Actions For Affected Features</span>
<span class="t" id="t51" style="left:1568.5px;top:765.5px;font-size:28.84px;-webkit-text-stroke:0.49px;letter-spacing:0.604px;">Affected Feature Lists</span>
<span class="t" id="t52" style="left:570px;top:881px;font-size:32.96px;font-weight:600;letter-spacing:-0.259px;">Actions for Affected Features:</span>
<div class="abs" style="left:570px;top:926px;width:2806px;height:81px;background:#f7f8fa;border-top:2px solid #d8dce2;border-bottom:2px solid #d8dce2;"></div>
<span class="t" id="t53" style="left:587px;top:966px;font-size:28.84px;font-weight:600;letter-spacing:-0.316px;">Feature Name</span>
<span class="t" id="t54" style="left:2328px;top:966px;font-size:28.84px;font-weight:600;letter-spacing:-0.059px;">Version</span>
<span class="t" id="t55" style="left:2483px;top:966px;font-size:28.84px;font-weight:600;letter-spacing:-0.561px;">Readiness</span>
<span class="t" id="t56" style="left:2817.5px;top:966px;font-size:28.84px;font-weight:600;letter-spacing:-0.310px;">Action</span>
<svg class="abs" style="left:2916px;top:952px;" width="28" height="28" viewBox="2916 952 28 28" fill="none"><circle cx="2930.2" cy="966" r="11.1" stroke="#3f85e0" stroke-width="2.3"/><circle cx="2930.2" cy="961" r="1.5" fill="#3f85e0"/><path d="M2928.4 964.6 H2930.6 V970.6 M2928.2 971 H2932.6" stroke="#3f85e0" stroke-width="1.9"/></svg>
<span class="t" id="t57" style="left:590.5px;top:1052.4px;font-size:28.84px;-webkit-text-stroke:0.49px;letter-spacing:-0.049px;">CLIENT_Avg_of_PriorApplications_AMT_ANNUITYs_104w</span>
<span class="t" id="t58" style="left:2332px;top:1052.4px;font-size:28.84px;-webkit-text-stroke:0.49px;letter-spacing:-0.444px;">V251013</span>
<span class="t" id="t59" style="left:2486px;top:1052.4px;font-size:28.84px;-webkit-text-stroke:0.49px;letter-spacing:-0.946px;">PRODUCTION_READY</span>
<div class="abs" style="left:2821px;top:1031px;width:600px;height:72px;border:2px solid #ced3db;border-radius:14px;background:#fff;"></div>
<div class="abs" style="left:2847.5px;top:1046px;width:492.5px;height:42px;overflow:hidden;"><span class="t" id="t60" style="left:0px;top:21px;font-size:24.72px;-webkit-text-stroke:0.42px;letter-spacing:0.613px;">deprecate and new production ready feature version</span></div>
<div class="abs" style="left:570px;top:1126.5px;width:2806px;height:2px;background:#e1e4e9;"></div>
<span class="t" id="t61" style="left:590.5px;top:1174.4px;font-size:28.84px;-webkit-text-stroke:0.49px;letter-spacing:-0.117px;">CLIENT_Avg_of_PriorApplications_AMT_APPLICATIONs_104w</span>
<span class="t" id="t62" style="left:2332px;top:1174.4px;font-size:28.84px;-webkit-text-stroke:0.49px;letter-spacing:-0.444px;">V251013</span>
<span class="t" id="t63" style="left:2486px;top:1174.4px;font-size:28.84px;-webkit-text-stroke:0.49px;letter-spacing:-0.946px;">PRODUCTION_READY</span>
<div class="abs" style="left:2821px;top:1153px;width:600px;height:72px;border:2px solid #ced3db;border-radius:14px;background:#fff;"></div>
<div class="abs" style="left:2847.5px;top:1168px;width:492.5px;height:42px;overflow:hidden;"><span class="t" id="t64" style="left:0px;top:21px;font-size:24.72px;-webkit-text-stroke:0.42px;letter-spacing:0.613px;">deprecate and new production ready feature version</span></div>
<div class="abs" style="left:570px;top:1248.5px;width:2806px;height:2px;background:#e1e4e9;"></div>
<span class="t" id="t65" style="left:590.5px;top:1296.4px;font-size:28.84px;-webkit-text-stroke:0.49px;letter-spacing:0.234px;">CLIENT_Avg_of_PriorApplications_Application_Credit_Discrepancies_104w</span>
<span class="t" id="t66" style="left:2332px;top:1296.4px;font-size:28.84px;-webkit-text-stroke:0.49px;letter-spacing:-0.444px;">V251013</span>
<span class="t" id="t67" style="left:2486px;top:1296.4px;font-size:28.84px;-webkit-text-stroke:0.49px;letter-spacing:-0.946px;">PRODUCTION_READY</span>
<div class="abs" style="left:2821px;top:1275px;width:600px;height:72px;border:2px solid #ced3db;border-radius:14px;background:#fff;"></div>
<div class="abs" style="left:2847.5px;top:1290px;width:492.5px;height:42px;overflow:hidden;"><span class="t" id="t68" style="left:0px;top:21px;font-size:24.72px;-webkit-text-stroke:0.42px;letter-spacing:0.613px;">deprecate and new production ready feature version</span></div>
<div class="abs" style="left:570px;top:1370.5px;width:2806px;height:2px;background:#e1e4e9;"></div>
<span class="t" id="t69" style="left:590.5px;top:1418.4px;font-size:28.84px;-webkit-text-stroke:0.49px;letter-spacing:-0.083px;">CLIENT_Avg_of_PriorApplications_CNT_PAYMENTs_104w</span>
<span class="t" id="t70" style="left:2332px;top:1418.4px;font-size:28.84px;-webkit-text-stroke:0.49px;letter-spacing:-0.444px;">V251013</span>
<span class="t" id="t71" style="left:2486px;top:1418.4px;font-size:28.84px;-webkit-text-stroke:0.49px;letter-spacing:-0.946px;">PRODUCTION_READY</span>
<div class="abs" style="left:2821px;top:1397px;width:600px;height:72px;border:2px solid #ced3db;border-radius:14px;background:#fff;"></div>
<div class="abs" style="left:2847.5px;top:1412px;width:492.5px;height:42px;overflow:hidden;"><span class="t" id="t72" style="left:0px;top:21px;font-size:24.72px;-webkit-text-stroke:0.42px;letter-spacing:0.613px;">deprecate and new production ready feature version</span></div>
<div class="abs" style="left:570px;top:1492.5px;width:2806px;height:2px;background:#e1e4e9;"></div>
<span class="t" id="t73" style="left:590.5px;top:1540.4px;font-size:28.84px;-webkit-text-stroke:0.49px;letter-spacing:0.007px;">CLIENT_Avg_of_PriorApplications_CNT_PAYMENTs_52w</span>
<span class="t" id="t74" style="left:2332px;top:1540.4px;font-size:28.84px;-webkit-text-stroke:0.49px;letter-spacing:-0.444px;">V251013</span>
<span class="t" id="t75" style="left:2486px;top:1540.4px;font-size:28.84px;-webkit-text-stroke:0.49px;letter-spacing:-0.946px;">PRODUCTION_READY</span>
<div class="abs" style="left:2821px;top:1519px;width:600px;height:72px;border:2px solid #ced3db;border-radius:14px;background:#fff;"></div>
<div class="abs" style="left:2847.5px;top:1534px;width:492.5px;height:42px;overflow:hidden;"><span class="t" id="t76" style="left:0px;top:21px;font-size:24.72px;-webkit-text-stroke:0.42px;letter-spacing:0.613px;">deprecate and new production ready feature version</span></div>
<div class="abs" style="left:570px;top:1614.5px;width:2806px;height:2px;background:#e1e4e9;"></div>
<span class="t" id="t77" style="left:590.5px;top:1662.4px;font-size:28.84px;-webkit-text-stroke:0.49px;letter-spacing:-0.055px;">CLIENT_Avg_of_PriorApplications_Credit_Goods_Price_Gaps_104w</span>
<span class="t" id="t78" style="left:2332px;top:1662.4px;font-size:28.84px;-webkit-text-stroke:0.49px;letter-spacing:-0.444px;">V251013</span>
<span class="t" id="t79" style="left:2486px;top:1662.4px;font-size:28.84px;-webkit-text-stroke:0.49px;letter-spacing:-0.946px;">PRODUCTION_READY</span>
<div class="abs" style="left:2821px;top:1641px;width:600px;height:72px;border:2px solid #ced3db;border-radius:14px;background:#fff;"></div>
<div class="abs" style="left:2847.5px;top:1656px;width:492.5px;height:42px;overflow:hidden;"><span class="t" id="t80" style="left:0px;top:21px;font-size:24.72px;-webkit-text-stroke:0.42px;letter-spacing:0.613px;">deprecate and new production ready feature version</span></div>
<div class="abs" style="left:570px;top:1736.5px;width:2806px;height:2px;background:#e1e4e9;"></div>
<span class="t" id="t81" style="left:590.5px;top:1784.4px;font-size:28.84px;-webkit-text-stroke:0.49px;letter-spacing:-0.063px;">CLIENT_Avg_of_PriorApplications_RATE_DOWN_PAYMENTs_52w</span>
<span class="t" id="t82" style="left:2332px;top:1784.4px;font-size:28.84px;-webkit-text-stroke:0.49px;letter-spacing:-0.444px;">V251013</span>
<span class="t" id="t83" style="left:2486px;top:1784.4px;font-size:28.84px;-webkit-text-stroke:0.49px;letter-spacing:-0.946px;">PRODUCTION_READY</span>
<div class="abs" style="left:2821px;top:1763px;width:600px;height:72px;border:2px solid #ced3db;border-radius:14px;background:#fff;"></div>
<div class="abs" style="left:2847.5px;top:1778px;width:492.5px;height:42px;overflow:hidden;"><span class="t" id="t84" style="left:0px;top:21px;font-size:24.72px;-webkit-text-stroke:0.42px;letter-spacing:0.613px;">deprecate and new production ready feature version</span></div>
<div class="abs" style="left:570px;top:1858.5px;width:2806px;height:2px;background:#e1e4e9;"></div>
<span class="t" id="t85" style="left:590.5px;top:1906.4px;font-size:28.84px;-webkit-text-stroke:0.49px;letter-spacing:-0.401px;">CLIENT_Avg_of_PriorApplications_SELLERPLACE_AREAs_104w</span>
<span class="t" id="t86" style="left:2332px;top:1906.4px;font-size:28.84px;-webkit-text-stroke:0.49px;letter-spacing:-0.444px;">V251013</span>
<span class="t" id="t87" style="left:2486px;top:1906.4px;font-size:28.84px;-webkit-text-stroke:0.49px;letter-spacing:-0.946px;">PRODUCTION_READY</span>
<div class="abs" style="left:2821px;top:1885px;width:600px;height:72px;border:2px solid #ced3db;border-radius:14px;background:#fff;"></div>
<div class="abs" style="left:2847.5px;top:1900px;width:492.5px;height:42px;overflow:hidden;"><span class="t" id="t88" style="left:0px;top:21px;font-size:24.72px;-webkit-text-stroke:0.42px;letter-spacing:0.613px;">deprecate and new production ready feature version</span></div>
<div class="abs" style="left:570px;top:1980.5px;width:2806px;height:2px;background:#e1e4e9;"></div>
<div class="abs" style="left:504px;top:2003px;width:2872px;height:79px;background:#f7f8fa;border:2px solid #d8dce2;border-right:none;"></div>
<span class="t" id="t89" style="left:521px;top:2042.6px;font-size:24.72px;font-weight:600;letter-spacing:-0.351px;">Results: 1 - 2 of 2</span>
<span class="t" id="t90" style="left:2913.5px;top:2043px;font-size:24.72px;font-weight:600;letter-spacing:-0.300px;">Rows per page:</span>
<div class="abs" style="left:3123px;top:2013px;width:160px;height:60px;background:#fff;border:2px solid #cdd2da;border-radius:9px;"></div>
<span class="t" id="t91" style="left:3144px;top:2043px;font-size:20.6px;-webkit-text-stroke:0.35px;color:#10163a;letter-spacing:0.152px;">100</span>
<svg class="abs" style="left:3244px;top:2030px;" width="18" height="26" viewBox="3244 2030 18 26" fill="none"><path d="M3248 2039.6 L3253 2035.2 L3258 2039.6 M3248 2046.4 L3253 2050.8 L3258 2046.4" stroke="#777" stroke-width="1.6" stroke-linecap="round" stroke-linejoin="round"/></svg>
</div></div></div>
<div id="help"><span class="t" id="t901" style="left:33px;top:51.5px;font-size:57.68px;font-weight:700;color:#fff;letter-spacing:0.000px;">?</span></div>
</div>
</body>
</html>
